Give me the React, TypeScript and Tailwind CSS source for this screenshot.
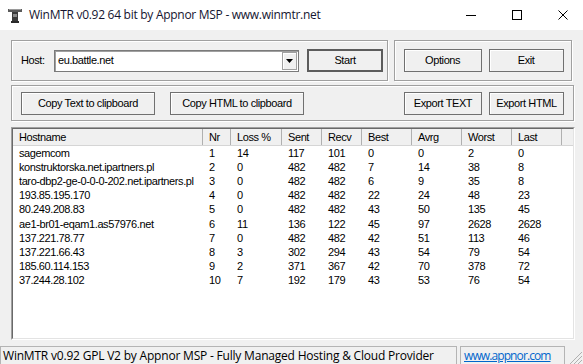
const rows = [
  ['sagemcom', '1', '14', '117', '101', '0', '0', '2', '0'],
  ['konstruktorska.net.ipartners.pl', '2', '0', '482', '482', '7', '14', '38', '8'],
  ['taro-dbp2-ge-0-0-0-202.net.ipartners.pl', '3', '0', '482', '482', '6', '9', '35', '8'],
  ['193.85.195.170', '4', '0', '482', '482', '22', '24', '48', '23'],
  ['80.249.208.83', '5', '0', '482', '482', '43', '50', '135', '45'],
  ['ae1-br01-eqam1.as57976.net', '6', '11', '136', '122', '45', '97', '2628', '2628'],
  ['137.221.78.77', '7', '0', '482', '482', '42', '51', '113', '46'],
  ['137.221.66.43', '8', '3', '302', '294', '43', '54', '79', '54'],
  ['185.60.114.153', '9', '2', '371', '367', '42', '70', '378', '72'],
  ['37.244.28.102', '10', '7', '192', '179', '43', '53', '76', '54'],
]

const headers = ['Hostname', 'Nr', 'Loss %', 'Sent', 'Recv', 'Best', 'Avrg', 'Worst', 'Last']
const widths = ['w-[190px]', 'w-[28px]', 'w-[51px]', 'w-[40px]', 'w-[40px]', 'w-[50px]', 'w-[50px]', 'w-[50px]', 'w-[50px]']

function Btn({ children, className = '', primary = false }: { children: React.ReactNode; className?: string; primary?: boolean }) {
  return (
    <div
      className={`flex h-[23px] items-center justify-center bg-[#f0f0f0] ${
        primary ? 'border-2 border-[#5c5c5c]' : 'border border-[#707070] shadow-[inset_1px_1px_0_#ffffff]'
      } ${className}`}
    >
      {children}
    </div>
  )
}

function Group({ children, className = '' }: { children: React.ReactNode; className?: string }) {
  return (
    <div className={`flex items-center border border-[#a0a0a0] shadow-[inset_1px_1px_0_#ffffff,1px_1px_0_#ffffff] ${className}`}>
      {children}
    </div>
  )
}

export default function App() {
  return (
    <div className="h-[364px] w-[583px] overflow-hidden bg-[#f0f0f0] font-['Liberation_Sans',Arial,sans-serif] text-[11px] tracking-[-0.4px] text-black">
      {/* title bar */}
      <div className="flex h-[30px] items-center bg-white">
        <svg className="ml-[8px] h-[15px] w-[14px]" viewBox="0 0 14 15">
          <rect x="0" y="1" width="14" height="3" fill="#5a5a5a" />
          <rect x="1" y="1" width="12" height="1" fill="#9a9a9a" />
          <rect x="4" y="4" width="6" height="10" fill="#3a3a3a" />
          <rect x="5" y="6" width="4" height="3" fill="#8a8a8a" />
          <rect x="3" y="13" width="8" height="2" fill="#2a2a2a" />
        </svg>
        <span className="ml-[7px] font-['Open_Sans',sans-serif] text-[12px] tracking-[-0.28px] text-[#141430]">
          WinMTR v0.92 64 bit by Appnor MSP - www.winmtr.net
        </span>
        <div className="ml-auto flex h-full">
          <div className="flex w-[46px] items-center justify-center">
            <div className="h-px w-[10px] bg-black" />
          </div>
          <div className="flex w-[46px] items-center justify-center">
            <div className="h-[10px] w-[10px] border border-black" />
          </div>
          <div className="flex w-[43px] items-center pl-[18px]">
            <svg className="h-[10px] w-[10px]" viewBox="0 0 10 10">
              <path d="M0.5 0.5 L9.5 9.5 M9.5 0.5 L0.5 9.5" stroke="#000" strokeWidth="1" />
            </svg>
          </div>
        </div>
      </div>

      <div className="px-[11px]">
        {/* row 1 */}
        <div className="mt-[10px] flex gap-[6px]">
          <Group className="h-[41px] w-[378px] pl-[9px]">
            <span className="w-[33px]">Host:</span>
            <div className="flex h-[22px] w-[245px] items-center border border-[#7a7a7a] bg-white shadow-[inset_1px_1px_0_#a0a0a0]">
              <span className="ml-[3px]">eu.battle.net</span>
              <div className="ml-auto mr-px flex h-[18px] w-[15px] items-center justify-center border border-[#a0a0a0] bg-[#f0f0f0] shadow-[inset_1px_1px_0_#ffffff]">
                <svg className="h-[4px] w-[7px]" viewBox="0 0 7 4">
                  <path d="M0 0 H7 L3.5 4 Z" fill="#000" />
                </svg>
              </div>
            </div>
            <Btn primary className="ml-[8px] w-[76px]">Start</Btn>
          </Group>
          <Group className="h-[41px] w-[179px] pl-[9px]">
            <Btn className="w-[78px]">Options</Btn>
            <Btn className="ml-[7px] w-[75px]">Exit</Btn>
          </Group>
        </div>

        {/* row 2 */}
        <Group className="mt-[4px] h-[36px] w-[563px] pl-[9px]">
          <Btn className="w-[134px]">Copy Text to clipboard</Btn>
          <Btn className="ml-[15px] w-[134px]">Copy HTML to clipboard</Btn>
          <Btn className="ml-auto w-[78px]">Export TEXT</Btn>
          <Btn className="ml-[7px] mr-[9px] w-[75px]">Export HTML</Btn>
        </Group>

        {/* list */}
        <div className="mt-[6px] h-[213px] w-[564px] border border-[#a0a0a0] border-b-white border-r-white">
          <div className="h-full border border-[#696969] border-b-[#e3e3e3] border-r-[#e3e3e3] bg-white">
            <div className="flex h-[17px] border-b border-[#d5d5d5] bg-[#f0f0f0]">
              {headers.map((h, i) => (
                <div key={h} className={`flex shrink-0 items-center border-r border-[#b0b0b0] pl-[6px] ${widths[i]}`}>
                  {h}
                </div>
              ))}
            </div>
            {rows.map((r) => (
              <div key={r[0]} className="flex h-[14.1px] items-center">
                {r.map((c, i) => (
                  <div key={i} className={`shrink-0 pl-[6px] leading-[14px] whitespace-nowrap ${widths[i]}`}>
                    {c}
                  </div>
                ))}
              </div>
            ))}
          </div>
        </div>
      </div>

      {/* status bar */}
      <div className="mt-[6px] flex h-[19px] font-['Open_Sans',sans-serif] text-[12px] tracking-[-0.2px]">
        <div className="flex w-[457px] items-center border border-b-0 border-[#b4b4b4] pl-[2px]">
          WinMTR v0.92 GPL V2 by Appnor MSP - Fully Managed Hosting &amp; Cloud Provider
        </div>
        <div className="ml-[3px] flex w-[105px] items-center border border-b-0 border-[#b4b4b4] pl-[3px] tracking-[-0.9px] text-[#0066cc] underline">
          www.appnor.com
        </div>
        <svg className="ml-auto mt-auto h-[14px] w-[14px]" viewBox="0 0 14 14">
          <path d="M13 5 L5 13 M13 9 L9 13 M13 1 L1 13" stroke="#b0b0b0" strokeWidth="1" />
        </svg>
      </div>
    </div>
  )
}
